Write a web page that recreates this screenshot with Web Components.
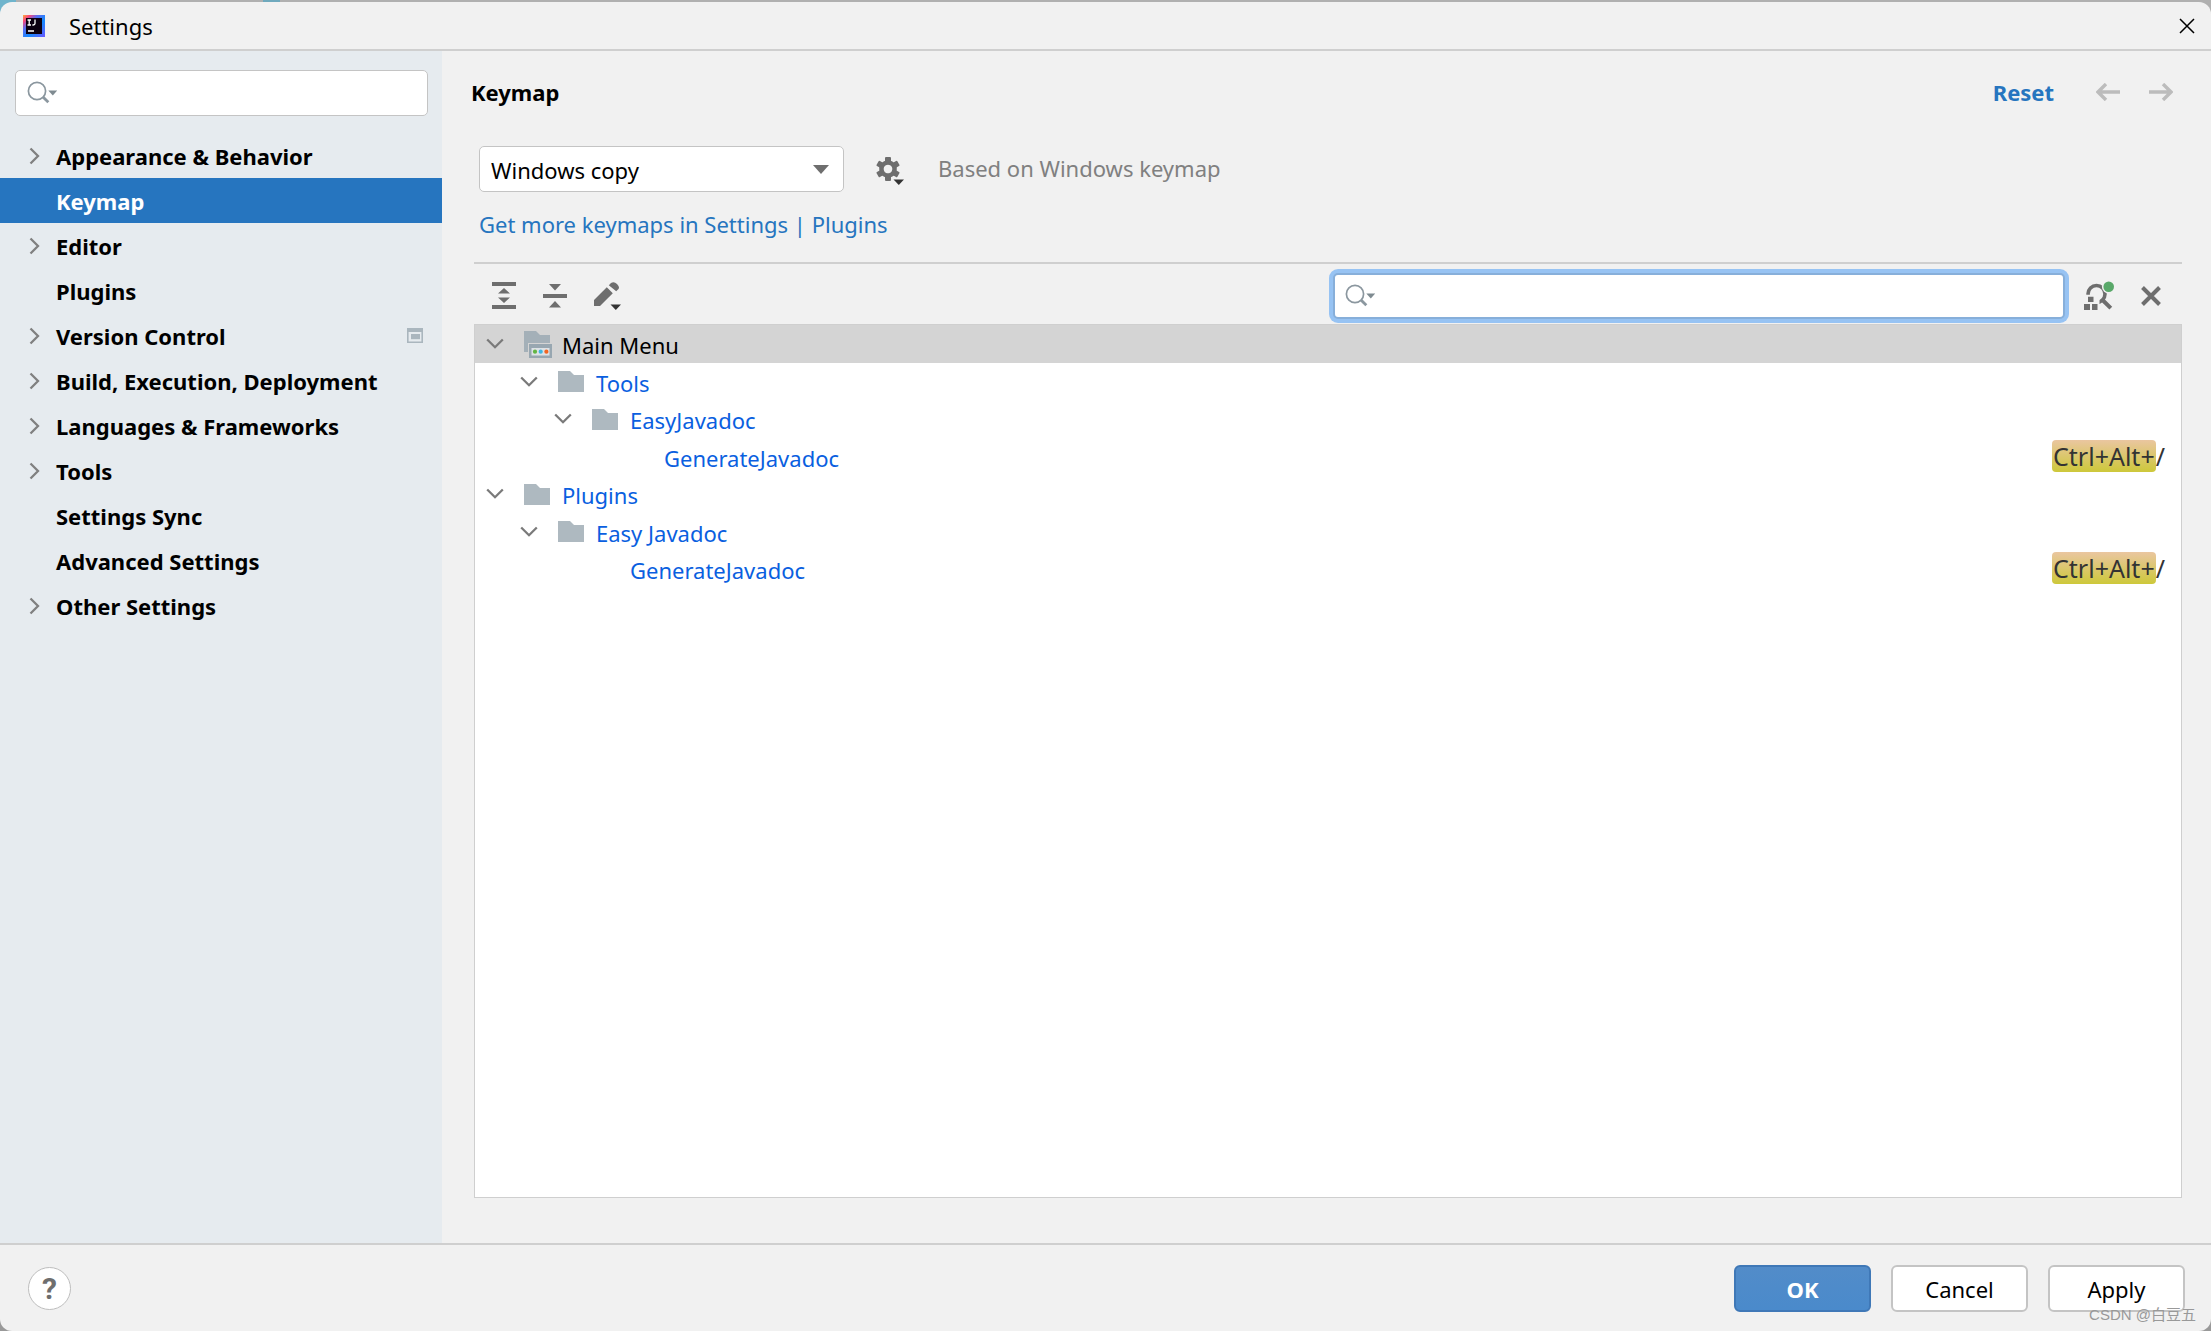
<!DOCTYPE html>
<html lang="en">
<head>
<meta charset="utf-8">
<title>Settings</title>
<style>
  html { height: 100%; }
  body {
    margin: 0; min-height: 100vh; display: flex; flex-direction: column;
    font: 22px/30px "Noto Sans", "Noto Sans CJK SC", sans-serif; color: #000;
    background: #b0b0b0;
    --panel: #f1f1f1; --line: #cfcfcf; --field-line: #c4c4c4; --accent: #2675bf; --glyph: #6e6e6e;
  }
</style>
</head>
<body>
<settings-window></settings-window>
<script>
const ICONS = {
  app: [24, 24, `<defs><linearGradient id="g" x1="0" y1="0" x2="1" y2="1"><stop offset="0" stop-color="#fdb03c"/><stop offset=".16" stop-color="#f8457a"/><stop offset=".34" stop-color="#5a6df2"/><stop offset=".6" stop-color="#1389fd"/><stop offset="1" stop-color="#6b57ff"/></linearGradient></defs><rect x="1" y="1" width="22" height="22" fill="url(#g)"/><rect x="4" y="4" width="16" height="16" fill="#0b0010"/><path d="M5.500 6h3.500M7.200 6v5M5.500 11h3.500M13 5.500v4.100q0 1.400-1.800 1.400h-.8M6 17h6" fill="none" stroke="#fff" stroke-width="1.300"/>`],
  close: [16, 16, `<path d="M1 1l14 14M15 1L1 15" stroke="#000" stroke-width="1.500"/>`],
  search: [30, 24, `<circle cx="10" cy="10" r="8.600" fill="none" stroke="#8b979f" stroke-width="1.700"/><path d="M16 16l5.300 5.300" stroke="#8b979f" stroke-width="2.800"/><path d="M21.300 9.500h9l-4.500 5z" fill="#7f8b91"/>`],
  right: [12, 18, `<path d="M1.500 1.500L9 9l-7.500 7.500" fill="none" stroke="#808080" stroke-width="2.300"/>`],
  down: [18, 12, `<path d="M1.200 1.500L9 9.200l7.800-7.700" fill="none" stroke="#7a7a7a" stroke-width="2.300"/>`],
  project: [16, 15, `<path fill-rule="evenodd" d="M0 0h16v15H0zM1.600 4v9.400h12.800V4z" fill="#aab6be"/><path d="M4 6h9v5.200H4z" fill="#aab6be"/>`],
  triangle: [16, 9, `<path d="M0 0h16L8 9z" fill="#6e6e6e"/>`],
  gear: [28, 28, `<g fill="#6e6e6e"><path fill-rule="evenodd" d="M12 3.200a8.800 8.800 0 1 0 .01 0zM12 7.700a4.300 4.300 0 1 1-.01 0z"/><g><rect x="9" y="0" width="6" height="5" rx="1"/><rect x="9" y="19" width="6" height="5" rx="1"/></g><g transform="rotate(60 12 12)"><rect x="9" y="0" width="6" height="5" rx="1"/><rect x="9" y="19" width="6" height="5" rx="1"/></g><g transform="rotate(-60 12 12)"><rect x="9" y="0" width="6" height="5" rx="1"/><rect x="9" y="19" width="6" height="5" rx="1"/></g></g><path d="M17.500 22.500h10.500l-5.200 5.500z" fill="#333"/>`],
  expand: [24, 27, `<path d="M0 0h24v4H0zM0 23h24v4H0zM12 6l6 5.500H6zM12 21l6-5.500H6z" fill="#6e6e6e"/>`],
  collapse: [24, 25, `<path d="M0 11h24v4H0zM12 7.500L18 1H6zM12 18l6 6.500H6z" fill="#6e6e6e"/>`],
  pencil: [28, 28, `<path d="M0 18L12.800 5.200l6 6L6 24H0zM14.800 3.200L17 1q3-2 6 1t1.500 5l-2.300 2.300z" fill="#6e6e6e"/><path d="M16.500 22.500H27l-5.200 5.500z" fill="#333"/>`],
  folder: [26, 21, `<path d="M0 0h12l4 4h10v17H0z" fill="#aeb9c0"/>`],
  menu: [28, 27, `<path d="M0 0h12l4 4h10v8H4v9H0z" fill="#a4b0b8"/><path fill="#98a7b1" d="M5 13h23v14H5z"/><path fill="#dde2e6" d="M7.500 17h18v7.500h-18z"/><circle cx="11" cy="20.700" r="2.100" fill="#62b543"/><circle cx="16.700" cy="20.700" r="2.100" fill="#40b6e0"/><circle cx="22.400" cy="20.700" r="2.100" fill="#f26522"/>`],
  back: [24, 18, `<path d="M10 1L2 9l8 8M2.500 9H24" fill="none" stroke="#bcbcbc" stroke-width="3.400"/>`],
  forward: [24, 18, `<path d="M14 1l8 8-8 8M21.500 9H0" fill="none" stroke="#bcbcbc" stroke-width="3.400"/>`],
  shortcut: [30, 29, `<circle cx="12.500" cy="13" r="8.500" fill="none" stroke="#6e6e6e" stroke-width="3.600"/><path d="M0 13.800h11v1.200h4.500v14H0z" fill="#f1f1f1"/><path d="M17.500 18l9.300 9.200" stroke="#6e6e6e" stroke-width="4"/><path d="M4 15.800h5.500v5.200H4zM0 23h6v6H0zM8 23h5.500v6H8z" fill="#6e6e6e"/><circle cx="24.700" cy="5.700" r="6.800" fill="#f1f1f1"/><circle cx="24.700" cy="5.700" r="5.300" fill="#59a869"/>`],
  cross: [20, 20, `<path d="M1.500 1.500l17 17M18.500 1.500l-17 17" stroke="#6e6e6e" stroke-width="4"/>`]
};

class Base extends HTMLElement {
  constructor() { super(); this.attachShadow({ mode: "open" }); }
  connectedCallback() {
    this.shadowRoot.innerHTML = `<style>*{box-sizing:border-box} button{font:inherit;color:inherit;border:0;background:none;padding:0;display:flex} a{text-decoration:none;color:inherit} ${this.css()}</style>${this.html()}`;
  }
  css() { return ":host{display:block}"; }
  html() { return "<slot></slot>"; }
}

customElements.define("ui-icon", class extends Base {
  css() { return ":host{display:inline-flex;flex:none} svg{display:block}"; }
  html() {
    const [w, h, body] = ICONS[this.getAttribute("name")];
    return `<svg width="${w}" height="${h}" viewBox="0 0 ${w} ${h}" aria-hidden="true">${body}</svg>`;
  }
});

customElements.define("title-bar", class extends Base {
  css() { return `:host{display:flex;align-items:center;height:49px;padding:0 16px 0 22px;gap:23px;border-bottom:2px solid var(--line);box-sizing:border-box}
    h1{font:inherit;margin:0;flex:1}`; }
  html() { return `<ui-icon name="app"></ui-icon><h1><slot></slot></h1><button aria-label="Close"><ui-icon name="close"></ui-icon></button>`; }
});

customElements.define("search-field", class extends Base {
  css() { return `:host{display:block}
    label{display:flex;align-items:center;gap:6px;height:46px;padding:0 11px;background:#fff;border:1px solid var(--field-line);border-radius:5px}
    input{flex:1;min-width:0;border:0;outline:0;background:none;font:inherit}
    :host([active]) label{border:2px solid #87afda;padding:0 10px;box-shadow:0 0 0 4px #97c3f3}`; }
  html() { return `<label><ui-icon name="search"></ui-icon><input type="text" aria-label="${this.getAttribute("label")}"></label>`; }
});

customElements.define("nav-item", class extends Base {
  css() { return `:host{display:block;font-weight:700}
    a{display:flex;align-items:center;height:45px;padding:0 19px 0 29px}
    .mark{width:27px;display:flex} .text{flex:1}
    :host([selected]){background:var(--accent);color:#fff}`; }
  html() { return `<a href="#"><span class="mark">${this.hasAttribute("leaf") ? "" : '<ui-icon name="right"></ui-icon>'}</span><span class="text"><slot></slot></span><slot name="end"></slot></a>`; }
});

customElements.define("side-bar", class extends Base {
  css() { return `:host{display:block;width:442px;flex:none;background:#e6ebef;box-sizing:border-box;padding-top:19px}
    search-field{margin:0 14px 17px 15px}`; }
  html() { return `<search-field label="Search settings"></search-field><nav><slot></slot></nav>`; }
});

customElements.define("keymap-select", class extends Base {
  css() { return `:host{display:grid;width:365px;height:46px;align-items:center}
    select,ui-icon{grid-area:1/1}
    select{appearance:none;width:100%;height:100%;font:inherit;color:inherit;background:#fff;border:1px solid var(--field-line);border-radius:5px;padding:2px 11px 0}
    ui-icon{justify-self:end;margin-right:15px;pointer-events:none}`; }
  html() { return `<select aria-label="Keymap"><option>Windows copy</option></select><ui-icon name="triangle"></ui-icon>`; }
});

customElements.define("key-stroke", class extends Base {
  css() { return `:host{display:flex;font-size:25px;line-height:32px;padding-bottom:2px;color:#333}
    mark{color:inherit;border-radius:4px;padding:0 1px;background:linear-gradient(#eac6a0,#cdc83a)}`; }
  html() { return `<mark><slot></slot></mark><slot name="rest"></slot>`; }
});

customElements.define("tree-row", class extends Base {
  css() {
    const level = Number(this.getAttribute("level"));
    return `:host{display:flex;align-items:center;height:38px;padding:0 16px 0 ${11 + level * 34}px;color:#0a5fe0;box-sizing:border-box}
    :host(:nth-child(even)){height:37px}
    :host([selected]){background:#d4d4d4;color:#000}
    .chev{width:38px} .pic{width:38px;display:flex}
    .text{flex:1;padding-top:2px}`;
  }
  html() {
    const icon = this.getAttribute("icon");
    return `<span class="chev">${icon ? '<button aria-label="Collapse"><ui-icon name="down"></ui-icon></button>' : ""}</span><span class="pic">${icon ? `<ui-icon name="${icon}"></ui-icon>` : ""}</span><span class="text"><slot></slot></span><slot name="keys"></slot>`;
  }
});

customElements.define("keymap-tree", class extends Base {
  css() { return `:host{display:block;flex:1;background:#fff;border:1px solid var(--line)}`; }
});

customElements.define("tool-bar", class extends Base {
  css() { return `:host{display:flex;align-items:center;height:62px;border-top:2px solid var(--line);padding:3px 21px 0 18px;box-sizing:border-box}
    .tools{display:flex;gap:27px;align-items:center;flex:1}
    search-field{width:732px;margin-right:19px}
    .more{display:flex;gap:27px;align-items:center}`; }
  html() { return `<div class="tools"><button aria-label="Expand all"><ui-icon name="expand"></ui-icon></button><button aria-label="Collapse all"><ui-icon name="collapse"></ui-icon></button><button aria-label="Edit shortcut"><ui-icon name="pencil"></ui-icon></button></div>
    <search-field active label="Search actions"></search-field>
    <div class="more"><button aria-label="Find by shortcut"><ui-icon name="shortcut"></ui-icon></button><button aria-label="Clear"><ui-icon name="cross"></ui-icon></button></div>`; }
});

customElements.define("keymap-page", class extends Base {
  css() { return `:host{flex:1;min-width:0;display:flex;flex-direction:column;padding:26px 29px 45px 32px;box-sizing:border-box}
    header{display:flex;align-items:center;padding-right:9px;margin-left:-3px;margin-bottom:39px}
    h2{font-size:inherit;margin:0;flex:1}
    .reset{color:var(--accent);font-weight:700;margin-right:42px}
    .nav{display:flex;gap:29px}
    .scheme{display:flex;align-items:center;margin-left:5px;height:46px}
    .gear{margin:0 34px 0 32px;padding-top:4px}
    .base{color:#808080;padding-bottom:2px}
    .plugins{color:var(--accent);margin:17px 0 23px 5px;align-self:flex-start}`; }
  html() { return `<header><h2>Keymap</h2><a class="reset" href="#">Reset</a><span class="nav"><button aria-label="Back"><ui-icon name="back"></ui-icon></button><button aria-label="Forward"><ui-icon name="forward"></ui-icon></button></span></header>
    <div class="scheme"><keymap-select></keymap-select><button class="gear" aria-label="Keymap actions"><ui-icon name="gear"></ui-icon></button><span class="base">Based on Windows keymap</span></div>
    <a class="plugins" href="#">Get more keymaps in Settings | Plugins</a>
    <tool-bar></tool-bar>
    <keymap-tree>
      <tree-row level="0" icon="menu" selected>Main Menu</tree-row>
      <tree-row level="1" icon="folder">Tools</tree-row>
      <tree-row level="2" icon="folder">EasyJavadoc</tree-row>
      <tree-row level="3">GenerateJavadoc<key-stroke slot="keys">Ctrl+Alt+<span slot="rest">/</span></key-stroke></tree-row>
      <tree-row level="0" icon="folder">Plugins</tree-row>
      <tree-row level="1" icon="folder">Easy Javadoc</tree-row>
      <tree-row level="2">GenerateJavadoc<key-stroke slot="keys">Ctrl+Alt+<span slot="rest">/</span></key-stroke></tree-row>
    </keymap-tree>`; }
});

customElements.define("push-button", class extends Base {
  css() { return `:host{display:block}
    button{width:137px;height:47px;align-items:center;justify-content:center;padding-top:2px;background:#fff;border:2px solid var(--field-line);border-radius:6px}
    :host([primary]) button{background:linear-gradient(#528cc9,#4a8acb);border-color:#3f78b7;color:#fff;font-weight:700}`; }
  html() { return `<button><slot></slot></button>`; }
});

customElements.define("button-bar", class extends Base {
  css() { return `:host{display:flex;align-items:center;height:88px;padding:0 26px 0 28px;border-top:2px solid var(--line);box-sizing:border-box;position:relative}
    .help{width:43px;height:43px;border-radius:50%;background:#fff;border:1px solid #bdbdbd;color:var(--glyph);font:700 30px/41px Roboto,sans-serif;justify-content:center}
    .buttons{display:flex;gap:20px;margin-left:auto}
    .credit{position:absolute;right:15px;bottom:6px;font:15px/20px "Liberation Sans","Noto Sans CJK SC",sans-serif;color:#999}`; }
  html() { return `<button class="help" aria-label="Help">?</button><div class="buttons"><slot></slot></div><span class="credit">CSDN @白豆五</span>`; }
});

customElements.define("settings-window", class extends Base {
  css() { return `:host{flex:1;display:flex;flex-direction:column;padding-top:2px;background:linear-gradient(90deg,#6fb4cc 16px,#b0b0b0 16px 263px,#6fa9bd 263px 280px,#b0b0b0 280px) top/100% 20px no-repeat #999}
    .frame{flex:1;display:flex;flex-direction:column;background:var(--panel);border-radius:12px;overflow:hidden}
    main{flex:1;display:flex}`; }
  html() { return `<div class="frame"><title-bar>Settings</title-bar>
    <main><side-bar>
      <nav-item>Appearance &amp; Behavior</nav-item>
      <nav-item leaf selected>Keymap</nav-item>
      <nav-item>Editor</nav-item>
      <nav-item leaf>Plugins</nav-item>
      <nav-item>Version Control<ui-icon slot="end" name="project"></ui-icon></nav-item>
      <nav-item>Build, Execution, Deployment</nav-item>
      <nav-item>Languages &amp; Frameworks</nav-item>
      <nav-item>Tools</nav-item>
      <nav-item leaf>Settings Sync</nav-item>
      <nav-item leaf>Advanced Settings</nav-item>
      <nav-item>Other Settings</nav-item>
    </side-bar><keymap-page></keymap-page></main>
    <button-bar><push-button primary>OK</push-button><push-button>Cancel</push-button><push-button>Apply</push-button></button-bar></div>`; }
});
</script>
</body>
</html>
